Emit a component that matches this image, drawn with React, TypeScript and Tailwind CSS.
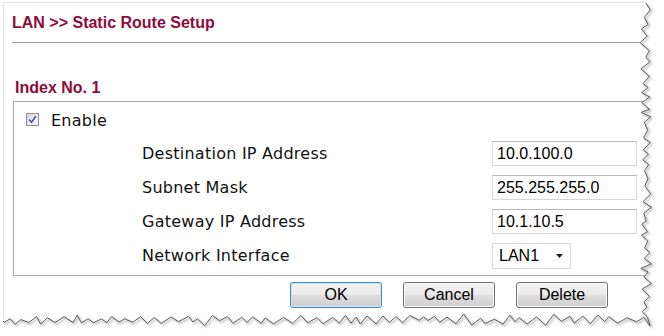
import React from "react";

const arial = "font-['Liberation_Sans',Arial,sans-serif]";
const verdana = "font-['DejaVu_Sans',Verdana,sans-serif]";

// torn paper edge along the right and bottom side
function makeEdge() {
  let s = 91;
  const r = () => {
    s = (s * 16807) % 2147483647;
    return s / 2147483647;
  };
  const pts: string[] = [];
  let i = 0;
  for (let y = 3; y < 320; y += 3 + r() * 5) {
    const x = 646 + (i % 2 ? 1 : -1) * (1 + r() * 4.5) + (r() - 0.5) * 2;
    pts.push(`${x.toFixed(1)},${y.toFixed(1)}`);
    i++;
  }
  pts.push("650,326");
  i = 0;
  for (let x = 644; x > 4; x -= 4 + r() * 6) {
    const y = 320 + (i % 2 ? 1 : -1) * (1 + r() * 4) + (r() - 0.5) * 2;
    pts.push(`${x.toFixed(1)},${y.toFixed(1)}`);
    i++;
  }
  pts.push("3,321");
  return pts;
}
const edge = makeEdge();
const edgeLine = "M" + edge.join(" L");
const outside = `M664,0 L${edge[0].split(",")[0]},0 L${edge.join(" L")} L0,321 L0,336 L664,336 Z`;

const rows = [
  { label: "Destination IP Address", value: "10.0.100.0" },
  { label: "Subnet Mask", value: "255.255.255.0" },
  { label: "Gateway IP Address", value: "10.1.10.5" },
];

function Button({ label, focused }: { label: string; focused?: boolean }) {
  return (
    <div
      className={`w-[92px] h-[26px] rounded-[3px] border flex items-center justify-center pb-[1px] text-[16px] text-black ${arial} bg-[linear-gradient(#f3f3f3,#ebebeb_48%,#dddddd_52%,#cfcfcf)] ${
        focused
          ? "border-[#3c8dc9] shadow-[inset_0_0_0_1px_#c4e8f9]"
          : "border-[#707070] shadow-[inset_0_0_0_1px_#fbfbfb]"
      }`}
    >
      {label}
    </div>
  );
}

export default function App() {
  return (
    <div className="relative w-[664px] h-[336px] overflow-hidden bg-white">
      <div className="ml-[3px] mt-[2px] w-[720px] h-[400px] border-l border-t border-[#e4e4e4]">
        <div className={`pt-[10px] pl-[8px] leading-[20px] text-[16px] font-bold text-[#8e0b3c] ${arial}`}>
          LAN &gt;&gt; Static Route Setup
        </div>
        <div className="mt-[9px] ml-[8px] h-px bg-[#9c9c9c]" />

        <div className={`mt-[35px] pl-[11px] leading-[20px] text-[16px] font-bold text-[#8e0b3c] ${arial}`}>
          Index No. 1
        </div>

        <div className="mt-[3px] ml-[9px] border-l border-t border-b border-[#a8a8a8] pb-[6px]">
          <div className={`mt-[3px] h-[28px] flex items-center pl-[12px] gap-[12px] ${verdana} text-[16px] text-[#111]`}>
            <div className="w-[13px] h-[13px] border border-[#8e8f8f] bg-[linear-gradient(135deg,#dcdcdc,#f6f6f6)] flex items-center justify-center">
              <svg width="9" height="9" viewBox="0 0 9 9">
                <path d="M1.2 4.6 L3.6 7.2 L7.8 1.2" fill="none" stroke="#3c5a9a" strokeWidth="1.6" />
              </svg>
            </div>
            <span className="mt-[3px] tracking-[0.25px]">Enable</span>
          </div>

          <div className={`mt-[8px] flex flex-col gap-[9px] ${verdana} text-[16px] text-[#111]`}>
            {rows.map((row) => (
              <div key={row.label} className="flex items-center h-[25px]">
                <span className="w-[478px] shrink-0 pl-[128px] tracking-[0.25px]">{row.label}</span>
                <div
                  className={`w-[145px] h-[25px] border border-[#d6d6d6] border-t-[#b9b9b9] flex items-center pl-[4px] text-[16px] text-black ${arial}`}
                >
                  {row.value}
                </div>
              </div>
            ))}
            <div className="flex items-center h-[26px]">
              <span className="w-[478px] shrink-0 pl-[128px] tracking-[0.25px]">Network Interface</span>
              <div className={`w-[79px] h-[26px] border border-[#dadada] flex items-center pl-[6px] pr-[7px] text-[16px] text-black ${arial}`}>
                <span className="flex-1">LAN1</span>
                <svg width="7" height="4" viewBox="0 0 7 4">
                  <path d="M0 0 H7 L3.5 4 Z" fill="#222" />
                </svg>
              </div>
            </div>
          </div>
        </div>

        <div className="mt-[6px] pl-[286px] flex gap-[21px]">
          <Button label="OK" focused />
          <Button label="Cancel" />
          <Button label="Delete" />
        </div>
      </div>

      <svg className="absolute inset-0 pointer-events-none" width="664" height="336" viewBox="0 0 664 336">
        <defs>
          <filter id="tornShadow" x="-10%" y="-10%" width="120%" height="120%">
            <feDropShadow dx="1.5" dy="1.5" stdDeviation="1.2" floodColor="#000" floodOpacity="0.55" />
          </filter>
        </defs>
        <path d={outside} fill="#fff" />
        <path d={edgeLine} fill="none" stroke="#5a5a5a" strokeWidth="1" filter="url(#tornShadow)" />
      </svg>
    </div>
  );
}
